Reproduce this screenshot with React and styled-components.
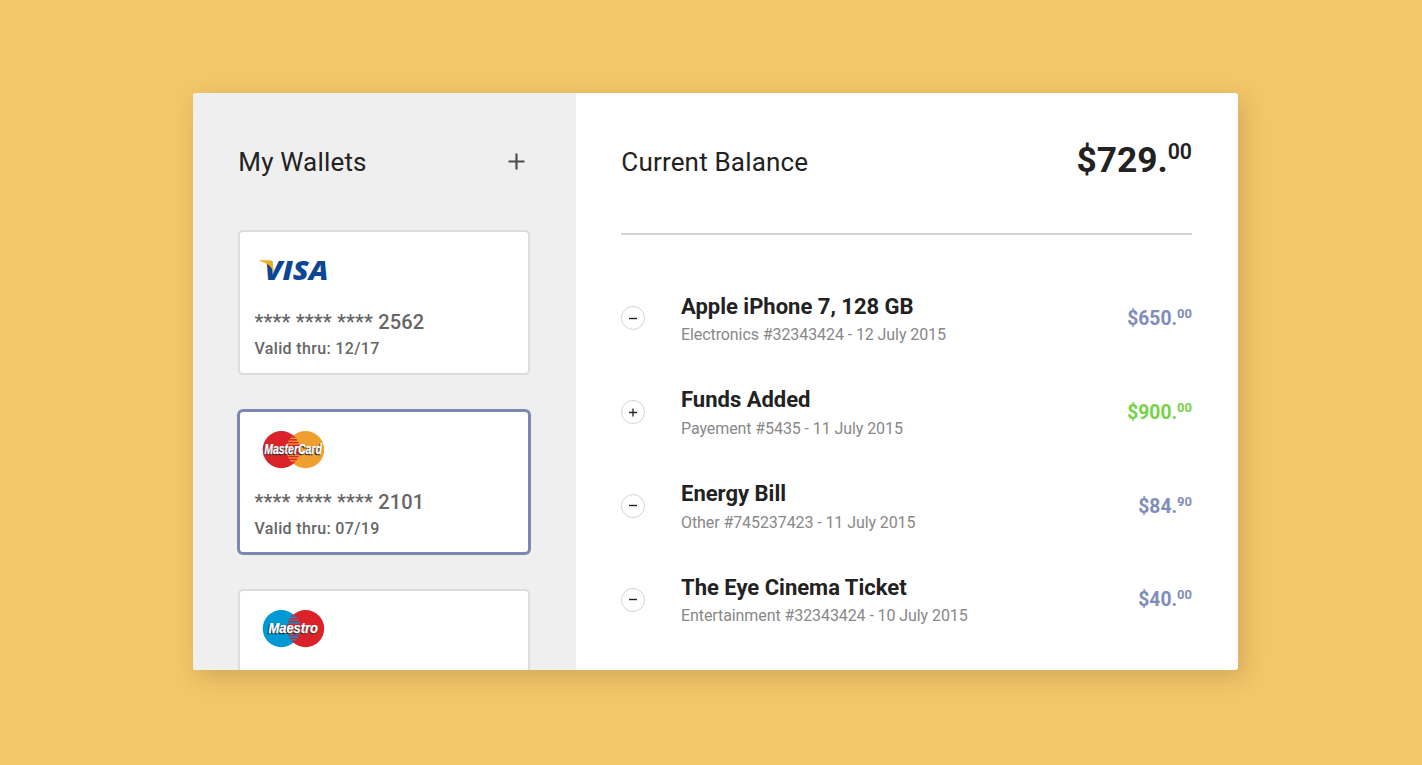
import React from 'react';
import styled, { createGlobalStyle } from 'styled-components';

const GlobalStyle = createGlobalStyle`
  * { box-sizing: border-box; }
  body {
    margin: 0;
    background: #f3c669;
    font-family: Roboto, "Liberation Sans", sans-serif;
    color: #222;
  }
`;

const Page = styled.main`
  height: 765px;
  padding: 93px 184px 95px 193px;
  overflow: hidden;
`;

const Panel = styled.div`
  display: flex;
  height: 577px;
  background: #fff;
  border-radius: 3px;
  box-shadow: 5px 7px 25px rgba(0, 0, 0, 0.15);
`;

const Wallets = styled.aside`
  width: 383px;
  padding: 0 46px 0 45px;
  background: #efefef;
  border-radius: 3px 0 0 3px;
  overflow: hidden;
`;

const WalletsHeader = styled.header`
  display: flex;
  justify-content: space-between;
  align-items: center;
  height: 137px;
  padding-right: 5px;
`;

const Heading = styled.h1`
  margin: 0;
  padding: 1px 0 0 0.3px;
  font-size: 26px;
  line-height: 30px;
  font-weight: 400;
  letter-spacing: 0.18px;
`;

const AddButton = styled.button`
  display: flex;
  padding: 0;
  border: 0;
  background: none;
`;

const CardList = styled.div`
  display: flex;
  flex-direction: column;
  gap: 35px;
`;

const Card = styled.article`
  flex: none;
  height: 144.5px;
  padding: 13px 15px 13px 14.5px;
  background: #fff;
  border: 2px solid ${(p) => (p.$active ? '#7e86b2' : '#dcdcdc')};
  border-radius: 5px;
  box-shadow: ${(p) => (p.$active ? '0 0 0 1px #7e86b2' : 'none')};
  color: #666;
  font-weight: 500;
`;

const Logo = styled.svg`
  display: block;
  width: 80px;
  height: 50px;
  margin-left: 0.5px;
`;

const CardNumber = styled.div`
  margin-top: 14px;
  font-size: 20px;
  line-height: 26px;
  letter-spacing: 0.16px;
`;

const CardValid = styled.div`
  padding-top: 1px;
  font-size: 16px;
  line-height: 26px;
  letter-spacing: 0.34px;
`;

const Account = styled.section`
  flex: 1;
  padding: 0 46px 0 45px;
`;

const BalanceHeader = styled.header`
  display: flex;
  justify-content: space-between;
  align-items: center;
  height: 142px;
  padding-bottom: 4px;
  border-bottom: 2px solid #d4d4d4;
`;

const Balance = styled.div`
  display: flex;
  align-items: flex-start;
  padding-bottom: 3px;
  font-size: 35.3px;
  line-height: 42px;
  font-weight: 700;
`;

const BalanceCents = styled.span`
  font-size: 21.3px;
  line-height: 26px;
  font-weight: 600;
`;

const Transactions = styled.ul`
  margin: 0;
  padding: 54.5px 0 0;
  list-style: none;
`;

const Transaction = styled.li`
  display: flex;
  align-items: flex-start;
  height: 93.8px;
`;

const Sign = styled.span`
  display: flex;
  align-items: center;
  justify-content: center;
  width: 24px;
  height: 24px;
  margin: 16.8px 36px 0 0;
  border: 1px solid #d4d4d4;
  border-radius: 50%;
`;

const Details = styled.div`
  flex: 1;
`;

const Name = styled.h2`
  margin: 0;
  font-size: 22px;
  line-height: 34px;
  font-weight: 700;
`;

const Meta = styled.p`
  margin: 0.45px 0 0;
  font-size: 16px;
  line-height: 22.3px;
  letter-spacing: -0.085px;
  color: #888;
`;

const Amount = styled.div`
  display: flex;
  align-items: flex-start;
  margin-top: 17.5px;
  font-size: 19.3px;
  line-height: 24px;
  font-weight: 700;
  color: ${(p) => (p.$income ? '#76d24a' : '#7f8dbd')};
`;

const Cents = styled.span`
  font-size: 13px;
  line-height: 13px;
`;

const VisaWord = styled.text`
  font-family: "Open Sans", "Noto Sans", sans-serif;
  font-style: italic;
  font-weight: 800;
  font-size: 26.5px;
`;

const CircleWord = styled.text`
  font-family: "Liberation Sans", sans-serif;
  font-style: italic;
  font-weight: 700;
  font-size: 13.8px;
`;

function VisaLogo() {
  return (
    <Logo viewBox="0 0 80 50" aria-label="Visa">
      <VisaWord x="9.4" y="35" textLength="64" lengthAdjust="spacingAndGlyphs" fill="#0e4595">VISA</VisaWord>
      <path d="M4.5 15.2 H14.8 Q16.6 15.2 17.1 17.1 L19 27.4 Q15 17.8 4.5 15.9 Z" fill="#f2ae14" />
    </Logo>
  );
}

const STRIPES = [-11.2, -8.4, -5.6, 5.6, 8.4, 11.2];

function CirclesLogo({ left, right, lens, stripe, word, x, width }) {
  return (
    <Logo viewBox="0 0 80 50" aria-label={word}>
      <circle cx="26.3" cy="24.6" r="18.6" fill={left} />
      <circle cx="50.6" cy="24.6" r="18.6" fill={right} />
      <path d="M38.5 10.5 A18.6 18.6 0 0 1 38.5 38.7 A18.6 18.6 0 0 1 38.5 10.5 Z" fill={lens} />
      {STRIPES.map((dy) => {
        const half = Math.sqrt(18.6 * 18.6 - dy * dy) - 11.6;
        return <rect key={dy} x={38.5 - half} y={24.6 + dy - 0.65} width={half * 2} height="1.3" fill={stripe} />;
      })}
      <CircleWord x={x - 0.8} y="30.1" textLength={width} lengthAdjust="spacingAndGlyphs" fill="#222" stroke="#222" strokeWidth="0.5">{word}</CircleWord>
      <CircleWord x={x} y="29.2" textLength={width} lengthAdjust="spacingAndGlyphs" fill="#fff" stroke="#fff" strokeWidth="0.25">{word}</CircleWord>
      <circle cx="67.7" cy="35" r="0.45" fill="#999" />
    </Logo>
  );
}

const WALLETS = [
  { id: 'visa', logo: <VisaLogo />, digits: '2562', valid: '12/17' },
  {
    id: 'mastercard',
    logo: <CirclesLogo left="#d9222a" right="#ee9f2d" lens="#d9222a" stripe="#ee9f2d" word="MasterCard" x={9.3} width={57.5} />,
    digits: '2101',
    valid: '07/19',
    active: true,
  },
  {
    id: 'maestro',
    logo: <CirclesLogo left="#0099d4" right="#d9222a" lens="#d9222a" stripe="#0099d4" word="Maestro" x={13.5} width={49.5} />,
  },
];

const TRANSACTIONS = [
  { name: 'Apple iPhone 7, 128 GB', meta: 'Electronics #32343424 - 12 July 2015', whole: '650', cents: '00' },
  { name: 'Funds Added', meta: 'Payement #5435 - 11 July 2015', whole: '900', cents: '00', income: true },
  { name: 'Energy Bill', meta: 'Other #745237423 - 11 July 2015', whole: '84', cents: '90' },
  { name: 'The Eye Cinema Ticket', meta: 'Entertainment #32343424 - 10 July 2015', whole: '40', cents: '00' },
];

export default function App() {
  return (
    <>
      <GlobalStyle />
      <Page>
        <Panel>
          <Wallets>
            <WalletsHeader>
              <Heading>My Wallets</Heading>
              <AddButton aria-label="Add wallet">
                <svg width="17" height="17" viewBox="0 0 17 17">
                  <path d="M0.5 8.5 H16.5 M8.5 0.5 V16.5" stroke="#4d4d4d" strokeWidth="2.2" />
                </svg>
              </AddButton>
            </WalletsHeader>
            <CardList>
              {WALLETS.map((w) => (
                <Card key={w.id} $active={w.active}>
                  {w.logo}
                  {w.digits && <CardNumber>**** **** **** {w.digits}</CardNumber>}
                  {w.valid && <CardValid>Valid thru: {w.valid}</CardValid>}
                </Card>
              ))}
            </CardList>
          </Wallets>
          <Account>
            <BalanceHeader>
              <Heading>Current Balance</Heading>
              <Balance>
                $729.<BalanceCents>00</BalanceCents>
              </Balance>
            </BalanceHeader>
            <Transactions>
              {TRANSACTIONS.map((t) => (
                <Transaction key={t.name}>
                  <Sign>
                    <svg width="8" height="9" viewBox="0 0 8 9">
                      <path d="M0 4.5 H8" stroke="#222" strokeWidth="1.4" />
                      {t.income && <path d="M4 0.5 V8.5" stroke="#222" strokeWidth="1.3" />}
                    </svg>
                  </Sign>
                  <Details>
                    <Name>{t.name}</Name>
                    <Meta>{t.meta}</Meta>
                  </Details>
                  <Amount $income={t.income}>
                    ${t.whole}.<Cents>{t.cents}</Cents>
                  </Amount>
                </Transaction>
              ))}
            </Transactions>
          </Account>
        </Panel>
      </Page>
    </>
  );
}
